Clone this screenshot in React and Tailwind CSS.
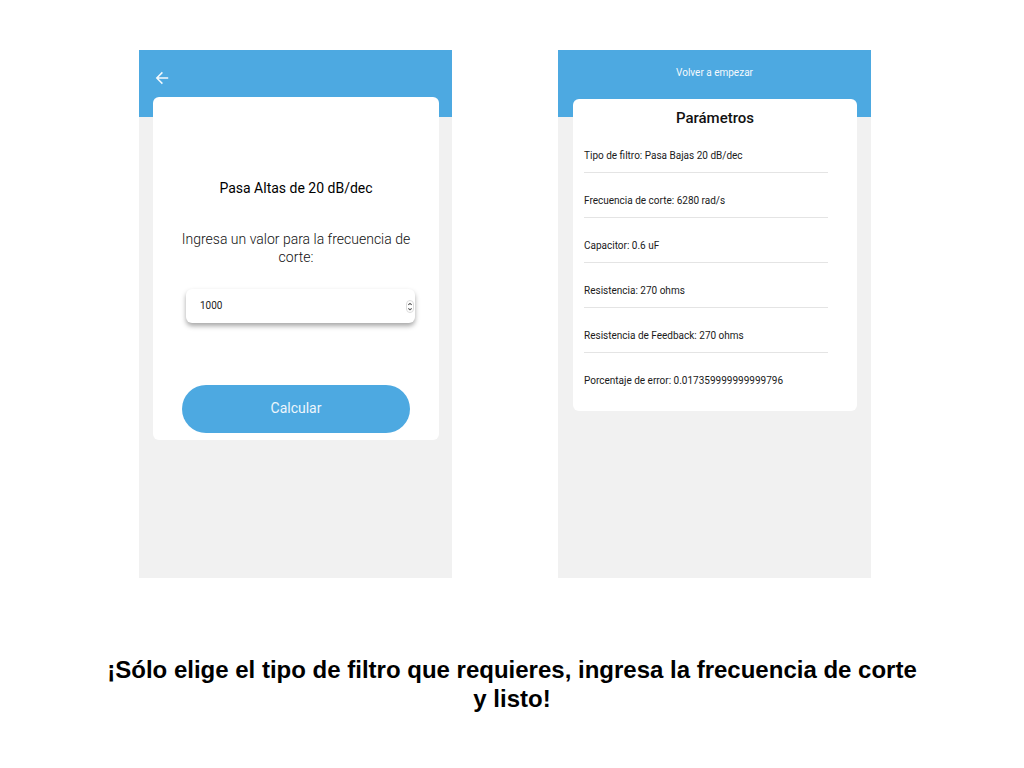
import { useState } from "react";

const parameters = [
  ["Tipo de filtro", "Pasa Bajas 20 dB/dec"],
  ["Frecuencia de corte", "6280 rad/s"],
  ["Capacitor", "0.6 uF"],
  ["Resistencia", "270 ohms"],
  ["Resistencia de Feedback", "270 ohms"],
  ["Porcentaje de error", "0.017359999999999796"],
];

function Phone({ header, children }) {
  return (
    <section className="flex min-h-[528px] w-[313px] flex-col bg-[#f1f1f1]">
      <header className="h-[67px] bg-[#4da9e1] text-[#f4f9fd]">{header}</header>
      {children}
    </section>
  );
}

function BackIcon() {
  return (
    <svg viewBox="0 0 14 14" className="size-[14px]" fill="none" stroke="currentColor" strokeWidth="1.5" aria-hidden="true">
      <path d="M13.2 7H2M7.4 1.4 1.8 7l5.6 5.6" />
    </svg>
  );
}

function StepperIcon() {
  return (
    <svg viewBox="0 0 8 13" className="h-[13px] w-2" fill="none" aria-hidden="true">
      <rect x="0.5" y="0.5" width="7" height="12" rx="3.5" fill="#fff" stroke="#dcdcdc" />
      <path d="M2.3 4.8 4 3.4l1.7 1.4M2.3 8.4 4 9.8l1.7-1.4" stroke="#555" strokeWidth="1.1" />
    </svg>
  );
}

function FilterForm() {
  const [frequency, setFrequency] = useState("1000");
  return (
    <Phone
      header={
        <button type="button" aria-label="Regresar" className="mt-[21px] ml-4 block">
          <BackIcon />
        </button>
      }
    >
      <form
        onSubmit={(e) => e.preventDefault()}
        className="-mt-5 mr-[13px] ml-[14px] rounded-md bg-white px-6 pt-[81px] pb-[7px] text-center"
      >
        <h2 className="text-[14px] leading-5 font-normal text-black">Pasa Altas de 20 dB/dec</h2>
        <label htmlFor="frequency" className="mt-8 block text-[14px] leading-[18px] font-light text-[#111]">
          Ingresa un valor para la frecuencia de corte:
        </label>
        <div className="mt-[23px] ml-[9px] flex h-[34px] items-center rounded-md bg-white pr-[1px] pl-[14px] shadow-[0_3px_5px_rgba(0,0,0,0.35)]">
          <input
            id="frequency"
            type="number"
            value={frequency}
            onChange={(e) => setFrequency(e.target.value)}
            className="min-w-0 flex-1 [appearance:textfield] bg-transparent text-[10px] leading-4 text-[#222] outline-none"
          />
          <StepperIcon />
        </div>
        <div className="mt-[62px] px-[5px]">
          <button type="submit" className="block h-12 w-full rounded-full bg-[#4da9e1] pb-[2px] text-[14px] text-[#edf6fc]">
            Calcular
          </button>
        </div>
      </form>
    </Phone>
  );
}

function Results() {
  return (
    <Phone
      header={
        <button type="button" className="mx-auto mt-[15px] block text-[10px] leading-4">
          Volver a empezar
        </button>
      }
    >
      <div className="-mt-[18px] mr-[14px] ml-[15px] rounded-md bg-white pt-[9px] pb-[23px] text-[#1a1a1a]">
        <h2 className="text-center text-[15px] leading-5 font-medium text-[#111]">Parámetros</h2>
        <ul className="mr-[29px] ml-[11px]">
          {parameters.map(([name, value]) => (
            <li
              key={name}
              className="border-b border-[#e4e4e4] pt-[21px] pb-[9px] text-[10px] leading-[14px] last:border-0 last:pb-0"
            >
              {name}: {value}
            </li>
          ))}
        </ul>
      </div>
    </Phone>
  );
}

export default function App() {
  return (
    <main className="min-h-screen bg-white pt-[50px] pb-10 font-['Roboto',sans-serif]">
      <div className="flex flex-wrap justify-center gap-[106px] pr-[14px]">
        <FilterForm />
        <Results />
      </div>
      <p className="mx-auto mt-[77px] max-w-[820px] text-center font-['Liberation_Sans',sans-serif] text-[24px] leading-[29px] font-bold text-black">
        ¡Sólo elige el tipo de filtro que requieres, ingresa la frecuencia de corte y listo!
      </p>
    </main>
  );
}
